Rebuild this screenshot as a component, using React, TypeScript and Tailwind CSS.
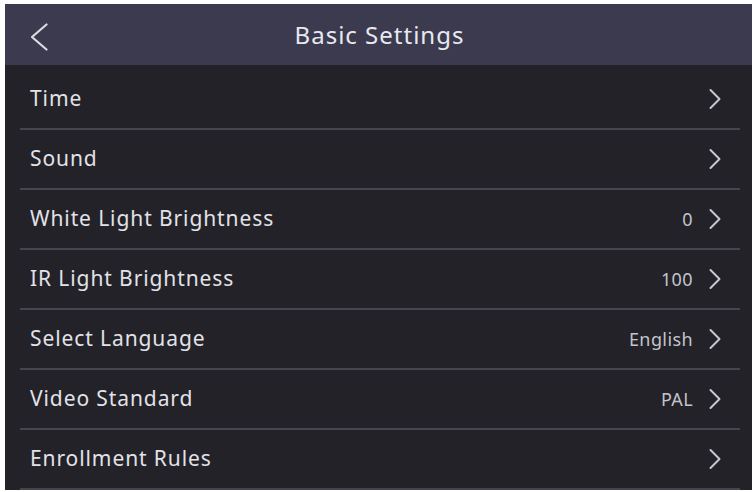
const rows = [
  { label: 'Time', value: '' },
  { label: 'Sound', value: '' },
  { label: 'White Light Brightness', value: '0' },
  { label: 'IR Light Brightness', value: '100' },
  { label: 'Select Language', value: 'English' },
  { label: 'Video Standard', value: 'PAL' },
  { label: 'Enrollment Rules', value: '' },
]

function Chevron() {
  return (
    <svg width="14" height="22" viewBox="0 0 14 22" fill="none" className="text-[#c9c9d1]">
      <path d="M2.5 2l9 9-9 9" stroke="currentColor" strokeWidth="2" strokeLinecap="round" strokeLinejoin="round" />
    </svg>
  )
}

export default function App() {
  return (
    <div
      className="w-[754px] h-[492px] bg-white pt-[4px] pl-[5px] pr-[2px] pb-[2px]"
      style={{ fontFamily: '"Noto Sans", "Open Sans", sans-serif' }}
    >
      <div className="h-full flex flex-col bg-[#222228]">
        {/* Header */}
        <div className="relative h-[61px] shrink-0 bg-[#3b3a4f] flex items-center justify-center">
          <button className="absolute left-[25px] top-[19px] w-[18px] h-[28px]">
            <svg width="18" height="28" viewBox="0 0 18 28" fill="none" className="text-[#dcdce4]">
              <path d="M16.5 1.5L2 14l14.5 12.5" stroke="currentColor" strokeWidth="2.2" strokeLinecap="round" strokeLinejoin="round" />
            </svg>
          </button>
          <h1 className="text-[24px] text-[#e8e8ef] tracking-[1px] pl-[2px]">Basic Settings</h1>
        </div>

        {/* Settings list */}
        <div className="pt-[5px] flex flex-col">
          {rows.map((row) => (
            <div key={row.label}>
              <div className="h-[58px] flex items-center pl-[25px] pr-[30px]">
                <span className="flex-1 text-[21px] text-[#e2e2e8] tracking-[0.9px]">{row.label}</span>
                {row.value && (
                  <span className="text-[18px] text-[#c4c4cc] tracking-[0.4px] mr-[15px]">{row.value}</span>
                )}
                <Chevron />
              </div>
              <div className="h-[2px] ml-[15px] mr-[12px] bg-[#45454e]" />
            </div>
          ))}
        </div>
      </div>
    </div>
  )
}
